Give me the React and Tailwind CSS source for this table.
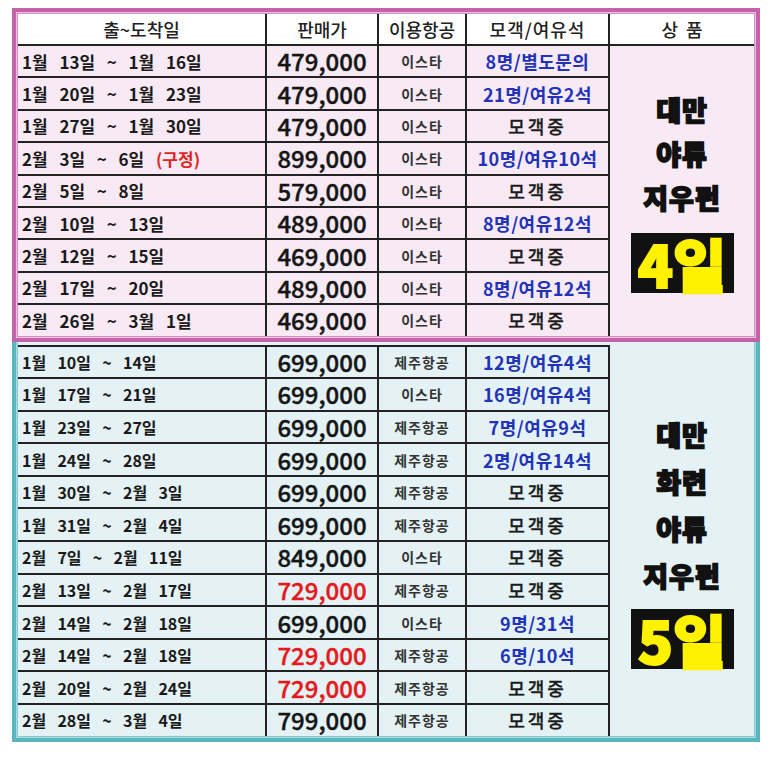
const pinkRows = [
  { date: '1월  13일  ~  1월  16일', price: '479,000', air: '이스타', seat: '8명/별도문의', blue: true },
  { date: '1월  20일  ~  1월  23일', price: '479,000', air: '이스타', seat: '21명/여유2석', blue: true },
  { date: '1월  27일  ~  1월  30일', price: '479,000', air: '이스타', seat: '모객중' },
  { date: '2월  3일  ~  6일  ', note: '(구정)', price: '899,000', air: '이스타', seat: '10명/여유10석', blue: true },
  { date: '2월  5일  ~  8일', price: '579,000', air: '이스타', seat: '모객중' },
  { date: '2월  10일  ~  13일', price: '489,000', air: '이스타', seat: '8명/여유12석', blue: true },
  { date: '2월  12일  ~  15일', price: '469,000', air: '이스타', seat: '모객중' },
  { date: '2월  17일  ~  20일', price: '489,000', air: '이스타', seat: '8명/여유12석', blue: true },
  { date: '2월  26일  ~  3월  1일', price: '469,000', air: '이스타', seat: '모객중' },
]

const tealRows = [
  { date: '1월  10일  ~  14일', price: '699,000', air: '제주항공', seat: '12명/여유4석', blue: true },
  { date: '1월  17일  ~  21일', price: '699,000', air: '이스타', seat: '16명/여유4석', blue: true },
  { date: '1월  23일  ~  27일', price: '699,000', air: '제주항공', seat: '7명/여유9석', blue: true },
  { date: '1월  24일  ~  28일', price: '699,000', air: '제주항공', seat: '2명/여유14석', blue: true },
  { date: '1월  30일  ~  2월  3일', price: '699,000', air: '제주항공', seat: '모객중' },
  { date: '1월  31일  ~  2월  4일', price: '699,000', air: '제주항공', seat: '모객중' },
  { date: '2월  7일  ~  2월  11일', price: '849,000', air: '이스타', seat: '모객중' },
  { date: '2월  13일  ~  2월  17일', price: '729,000', red: true, air: '제주항공', seat: '모객중' },
  { date: '2월  14일  ~  2월  18일', price: '699,000', air: '이스타', seat: '9명/31석', blue: true },
  { date: '2월  14일  ~  2월  18일', price: '729,000', red: true, air: '제주항공', seat: '6명/10석', blue: true },
  { date: '2월  20일  ~  2월  24일', price: '729,000', red: true, air: '제주항공', seat: '모객중' },
  { date: '2월  28일  ~  3월  4일', price: '799,000', air: '제주항공', seat: '모객중' },
]

const Row = ({ row, bg, dateSize }) => (
  <>
    <div className={`${bg} flex items-center pl-[4px] whitespace-pre leading-none font-bold text-[#1a1a1a] [word-spacing:2px] ${dateSize}`}>
      {row.date}
      {row.note && <span className="text-[#e02424]">{row.note}</span>}
    </div>
    <div className={`${bg} flex items-center justify-center leading-none text-[24px] font-medium [-webkit-text-stroke:0.4px_currentColor] ${row.red ? 'text-[#e3191d]' : 'text-[#151515]'}`}>
      {row.price}
    </div>
    <div className={`${bg} flex items-center justify-center leading-none text-[14px] font-bold tracking-[1px] text-[#333]`}>
      {row.air}
    </div>
    <div
      className={`${bg} flex items-center justify-center leading-none ${
        row.blue ? 'text-[18px] font-bold tracking-[0.5px] text-[#2233b8]' : 'text-[18px] font-medium tracking-[3px] text-[#1a1a1a] [-webkit-text-stroke:0.3px_#1a1a1a]'
      }`}
    >
      {row.seat}
    </div>
  </>
)

const Product = ({ lines, days, pitch, gap }) => (
  <div className="flex flex-col items-center justify-center">
    {lines.map((l) => (
      <div key={l} className={`text-[27px] font-black text-[#111] tracking-[1px] [-webkit-text-stroke:1.6px_#111] ${pitch}`}>
        {l}
      </div>
    ))}
    <div className={`${gap} w-[103px] h-[60px] bg-[#111] flex items-center justify-center text-[58px] font-black leading-none text-[#fff200] [-webkit-text-stroke:2px_#fff200]`}>
      {days}
    </div>
  </div>
)

export default function App() {
  return (
    <div className="min-h-screen bg-white pt-[8px] pl-[12px] font-['Noto_Sans_CJK_KR',sans-serif]">
      <div className="w-[748px]">
        {/* 4일 상품 */}
        <div className="border-4 border-[#c463a9] bg-[#eac2df] p-[1px]">
          <div className="border border-[#d88cc4]">
            <div className="grid grid-cols-[247px_110px_86px_141px_1fr] grid-rows-[30px] auto-rows-[30.4px] gap-[2px] bg-[#222]">
              <div className="bg-white flex items-center justify-center leading-none text-[18px] font-medium text-[#222]">출~도착일</div>
              <div className="bg-white flex items-center justify-center leading-none text-[18px] font-medium text-[#222]">판매가</div>
              <div className="bg-white flex items-center justify-center leading-none text-[18px] font-medium text-[#222]">이용항공</div>
              <div className="bg-white flex items-center justify-center leading-none text-[18px] font-medium text-[#222] tracking-[1px]">모객/여유석</div>
              <div className="bg-white flex items-center justify-center leading-none text-[18px] font-medium text-[#222] whitespace-pre">상  품</div>
              <div className="col-start-5 row-[2/span_9] bg-[#f8eaf4] flex items-center justify-center">
                <Product lines={['대만', '야류', '지우펀']} days="4일" pitch="leading-[44px]" gap="mt-[13px]" />
              </div>
              {pinkRows.map((r, i) => (
                <Row key={i} row={r} bg="bg-[#f8eaf4]" dateSize="text-[17px]" />
              ))}
            </div>
          </div>
        </div>

        {/* 5일 상품 */}
        <div className="border-x-4 border-b-4 border-[#5ab5bf] bg-[#a9dce1] px-[1px] pb-[1px]">
          <div className="border-x border-b border-[#86cad1] bg-[#e4f2f5] pt-[3px]">
            <div className="grid grid-cols-[247px_110px_86px_141px_1fr] auto-rows-[30.6px] gap-[2px] bg-[#222] pt-[2px]">
              <div className="col-start-5 row-[1/span_12] -mt-[2px] bg-[#e4f2f5] flex items-center justify-center">
                <Product lines={['대만', '화련', '야류', '지우펀']} days="5일" pitch="leading-[47px]" gap="mt-[10px]" />
              </div>
              {tealRows.map((r, i) => (
                <Row key={i} row={r} bg="bg-[#e4f2f5]" dateSize="text-[16px]" />
              ))}
            </div>
          </div>
        </div>
      </div>
    </div>
  )
}
